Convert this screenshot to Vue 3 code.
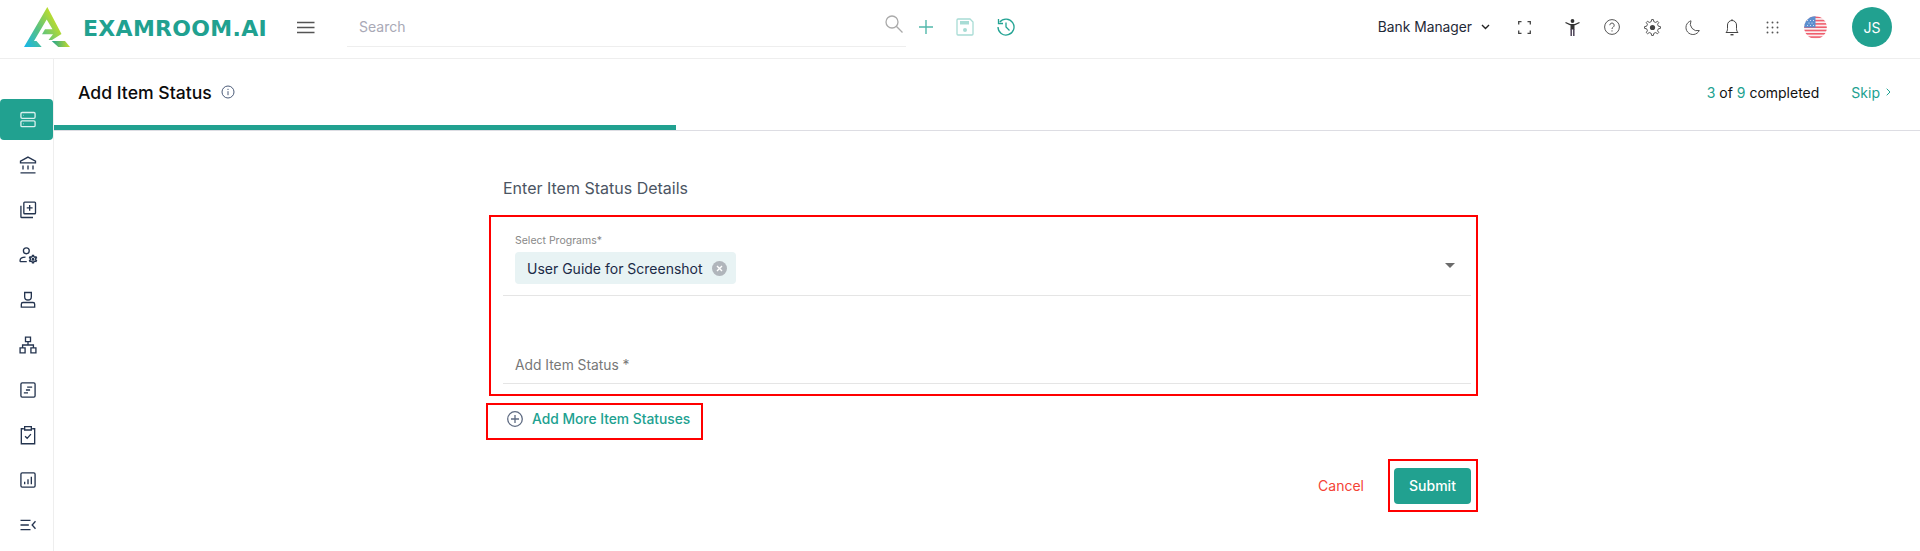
<script setup>
function gearPath(cx, cy, ro, ri, n) {
  const pts = []
  for (let i = 0; i < n; i++) {
    const a = (i / n) * Math.PI * 2
    const w = Math.PI / n
    const list = [[ri, a - w * 0.55], [ro, a - w * 0.28], [ro, a + w * 0.28], [ri, a + w * 0.55]]
    for (const [r, t] of list) pts.push((cx + r * Math.sin(t)).toFixed(2) + ' ' + (cy - r * Math.cos(t)).toFixed(2))
  }
  return 'M' + pts.join('L') + 'z'
}
const topGear = gearPath(8.5, 8.5, 8, 6, 8)
const sideIcons = [
  'M5 3h14a1.5 1.5 0 0 1 1.5 1.5v4A1.5 1.5 0 0 1 19 10H5a1.5 1.5 0 0 1-1.5-1.5v-4A1.5 1.5 0 0 1 5 3zM5 13h14a1.5 1.5 0 0 1 1.5 1.5v4A1.5 1.5 0 0 1 19 20H5a1.5 1.5 0 0 1-1.5-1.5v-4A1.5 1.5 0 0 1 5 13zM6.500 6.500h.5M6.500 16.500h.5',
  'M12 2.500L21 7.500V9.500H3V7.500zM6 12.500V17.500M12 12.500V17.500M18 12.500V17.500M3 21.500H21',
  'M8 2.500h12a1 1 0 0 1 1 1v12a1 1 0 0 1-1 1H8a1 1 0 0 1-1-1v-12a1 1 0 0 1 1-1zM3.500 7V20a1 1 0 0 0 1 1H18M14 6v7M10.500 9.500h7',
  'M10 3.500a3.500 3.500 0 1 1 0 7a3.500 3.500 0 0 1 0-7zM2.500 20v-1.500c0-2.500 3-4 6.500-4M2.500 20h8M' + gearPath(18, 17, 4.5, 3.3, 6).slice(1) + 'M18 16a1 1 0 1 1 0 2a1 1 0 0 1 0-2z',
  'M8 3h8V8a4 4 0 0 1-8 0zM6 15h12a2 2 0 0 1 2 2v3.500H4V17a2 2 0 0 1 2-2zM4 20.500H20',
  'M9 2.500h6v5.500H9zM12 8v4M5.500 15v-3h13v3M2.500 15.500h6v6h-6zM15.500 15.500h6v6h-6z',
  'M5 3.500h14a1.500 1.500 0 0 1 1.500 1.500v14a1.500 1.500 0 0 1-1.500 1.500H5A1.500 1.500 0 0 1 3.500 19V5A1.500 1.500 0 0 1 5 3.500zM11 8.500h6M9.500 12h5M7 15.500h5',
  'M7 4.500H4v18h16v-18H17M8 2h8v4H8zM8.500 13.500l2.500 2.500 4.500-5',
  'M5 3.500h14a1.500 1.500 0 0 1 1.500 1.500v14a1.500 1.500 0 0 1-1.500 1.500H5A1.500 1.500 0 0 1 3.500 19V5A1.500 1.500 0 0 1 5 3.500zM8 17v-3M12 17v-6M16 17V8',
  'M3 6.500h12M3 12h10M3 17.500h12M21 7.500L17 12l4 4.500',
]
const stripes = [0, 1, 2, 3, 4, 5, 6]
const stars = [[-8, -7], [-5, -7], [-2, -7], [-6.500, -4.500], [-3.500, -4.500], [-8, -2], [-5, -2], [-2, -2]]
</script>

<template>
  <div class="page">
    <header class="topbar">
      <div class="brand">
        <svg class="logo" width="46" height="40" viewBox="0 0 46 40">
          <defs>
            <linearGradient id="lg" x1="0" y1="1" x2="1" y2="0.350">
              <stop offset="0" stop-color="#14b6ee" />
              <stop offset="0.450" stop-color="#55c185" />
              <stop offset="1" stop-color="#d2e21a" />
            </linearGradient>
            <linearGradient id="lg2" x1="0" y1="0" x2="1" y2="0">
              <stop offset="0" stop-color="#1fa38f" />
              <stop offset="1" stop-color="#c9de2a" />
            </linearGradient>
          </defs>
          <path fill="url(#lg)" d="M23.300 0L0 40H17.700L12.500 34H10L22.700 12.500L28.500 22.300H21L18 27.300H29L24.500 33H28L37.500 27z" />
          <path fill="url(#lg2)" d="M27.700 34H41L46 40H34.300z" />
        </svg>
        <span class="wordmark">EXAMROOM.AI</span>
      </div>
      <svg class="burger" width="18" height="13" viewBox="0 0 18 13"><path d="M0 1.500H17.500M0 6.500H17.500M0 11.500H17.500" stroke="#555" stroke-width="1.700" /></svg>
      <div class="search">
        <span class="search-text">Search</span>
        <svg class="search-icon" width="18" height="18" viewBox="0 0 18 18" fill="none" stroke="#aaa" stroke-width="1.300"><circle cx="7" cy="7" r="6" /><path d="M11.300 11.300L17.500 17.500" /></svg>
      </div>
      <div class="actions">
        <svg width="14" height="14" viewBox="0 0 14 14"><path d="M7 0V14M0 7H14" stroke="#52b8ab" stroke-width="1.400" /></svg>
        <svg width="18" height="18" viewBox="0 0 18 18" fill="none"><path d="M2 1H14L17 4V16a1 1 0 0 1-1 1H2a1 1 0 0 1-1-1V2a1 1 0 0 1 1-1z" stroke="#a8dcd5" stroke-width="1.300" /><path d="M4 3H13V6.500H4z" fill="#a8dcd5" /><circle cx="9" cy="12" r="2" fill="#a8dcd5" /></svg>
        <svg width="18" height="18" viewBox="0 0 18 18" fill="none" stroke="#22a393" stroke-width="1.300"><path d="M2.800 4A8 8 0 1 1 1 9" /><path d="M1.500 1V5.500H6" /><path d="M9 4.500V9L12.500 12.500" /></svg>
      </div>
      <div class="right">
        <div class="role">
          <span>Bank Manager</span>
          <svg width="9" height="6" viewBox="0 0 9 6" fill="none"><path d="M1 1L4.500 4.500L8 1" stroke="#222" stroke-width="1.400" /></svg>
        </div>
        <svg class="full" width="13" height="13" viewBox="0 0 13 13" fill="none" stroke="#444" stroke-width="1.300"><path d="M.700 3.500V.700H3.500M9.500.700H12.300V3.500M12.300 9.500V12.300H9.500M3.500 12.300H.700V9.500" /></svg>
        <div class="tools">
          <span class="tool"><svg width="15" height="17" viewBox="0 0 15 17"><circle cx="7.500" cy="2" r="1.900" fill="#333" /><path d="M.500 3.500L5 5.700H10L14.500 3.500" stroke="#333" stroke-width="1.300" fill="none" /><path d="M5.500 5.500H9.500V10.500H5.500z" fill="#333" /><path d="M6.200 10V17M8.800 10V17" stroke="#4e4458" stroke-width="1.500" /></svg></span>
          <span class="tool"><svg width="16" height="16" viewBox="0 0 16 16" fill="none" stroke="#555" stroke-width="1"><circle cx="8" cy="8" r="7.400" /><path d="M5.800 6.200a2.200 2.200 0 1 1 3.400 1.900C8.400 8.600 8 9 8 10" /><path d="M8 11.300v1.200" /></svg></span>
          <span class="tool"><svg width="17" height="17" viewBox="0 0 17 17" fill="none"><path :d="topGear" stroke="#555" stroke-width="1" stroke-linejoin="round" /><circle cx="8.500" cy="8.500" r="2.600" fill="#444" /></svg></span>
          <span class="tool"><svg width="15" height="15" viewBox="0 0 15 15" fill="none"><path d="M6 .8A7 7 0 1 0 14.300 10.500A7 7 0 0 1 6 .8z" stroke="#555" stroke-width="1" /></svg></span>
          <span class="tool"><svg width="14" height="17" viewBox="0 0 14 17" fill="none" stroke="#444" stroke-width="1"><path d="M1 13.500c1-1 1.500-2 1.500-4V6a4.500 4.500 0 0 1 9 0v3.500c0 2 .5 3 1.500 4z" /><path d="M5.500 15.700h3" stroke-width="1.400" /><path d="M7 .2v1.500" /></svg></span>
          <span class="tool"><svg width="13" height="13" viewBox="0 0 13 13" fill="#555"><circle cx="1.500" cy="1.500" r=".95" /><circle cx="6.500" cy="1.500" r=".95" /><circle cx="11.500" cy="1.500" r=".95" /><circle cx="1.500" cy="6.500" r=".95" /><circle cx="6.500" cy="6.500" r=".95" /><circle cx="11.500" cy="6.500" r=".95" /><circle cx="1.500" cy="11.500" r=".95" /><circle cx="6.500" cy="11.500" r=".95" /><circle cx="11.500" cy="11.500" r=".95" /></svg></span>
        </div>
        <svg class="flag" width="23" height="23" viewBox="-11.500 -11.500 23 23">
          <defs><clipPath id="fc"><circle r="11.300" /></clipPath></defs>
          <g clip-path="url(#fc)">
            <rect x="-12" y="-12" width="24" height="24" fill="#fbeef0" />
            <rect v-for="s in stripes" :key="s" x="-12" :y="-11 + s * 3.300" width="24" height="1.600" fill="#ef5f6e" />
            <rect x="-12" y="-12" width="12" height="12" fill="#5c8fcf" />
            <circle v-for="(p, i) in stars" :key="i" :cx="p[0]" :cy="p[1]" r=".55" fill="#e6eefa" />
          </g>
        </svg>
        <div class="avatar">JS</div>
      </div>
    </header>

    <div class="body">
      <nav class="side">
        <div v-for="(d, i) in sideIcons" :key="i" class="side-item" :class="{ active: i === 0 }">
          <svg width="20" height="20" viewBox="0 0 24 24" fill="none" stroke="currentColor" stroke-width="1.600"><path :d="d" /></svg>
        </div>
      </nav>

      <main class="main">
        <div class="head">
          <div class="head-row">
            <h1 class="title">Add Item Status</h1>
            <svg class="info" width="14" height="14" viewBox="0 0 14 14" fill="none" stroke="#4b5b78" stroke-width="1"><circle cx="7" cy="7" r="6" /><path d="M7 6.200V10.200" /><path d="M7 3.800V5" /></svg>
            <div class="count"><b>3</b> of <b>9</b> completed</div>
            <div class="skip">Skip<svg width="5" height="8" viewBox="0 0 5 8" fill="none"><path d="M.700.700L4 4L.700 7.300" stroke="#22a393" stroke-width="1" /></svg></div>
          </div>
          <div class="progress"><div class="progress-fill"></div></div>
        </div>

        <section class="form">
          <h2 class="form-title">Enter Item Status Details</h2>
          <div class="mark fields">
            <div class="field-select">
              <label class="mini-label">Select Programs*</label>
              <div class="select-row">
                <div class="chip">
                  <span>User Guide for Screenshot</span>
                  <svg width="15" height="15" viewBox="0 0 15 15"><circle cx="7.500" cy="7.500" r="7.500" fill="#b0b5bb" /><path d="M5 5L10 10M10 5L5 10" stroke="#fff" stroke-width="1.400" /></svg>
                </div>
                <span class="caret"></span>
              </div>
            </div>
            <div class="field-text">Add Item Status *</div>
          </div>
          <div class="mark add-more">
            <svg width="16" height="16" viewBox="0 0 16 16" fill="none" stroke="#5f6b82" stroke-width="1.300"><circle cx="8" cy="8" r="7.300" /><path d="M8 4V12M4 8H12" /></svg>
            <span>Add More Item Statuses</span>
          </div>
          <div class="footer">
            <span class="cancel">Cancel</span>
            <div class="mark submit-wrap"><button class="submit">Submit</button></div>
          </div>
        </section>
      </main>
    </div>
  </div>
</template>

<style>
html, body { margin: 0; background: #fff; }
</style>

<style scoped>
.page {
  width: 1920px;
  height: 551px;
  overflow: hidden;
  font-family: Inter, "Liberation Sans", sans-serif;
  font-size: 14px;
  color: #1f2937;
  background: #fff;
  display: flex;
  flex-direction: column;
}
.topbar {
  height: 58px;
  flex: none;
  box-sizing: content-box;
  border-bottom: 1px solid #eeeeee;
  display: flex;
  align-items: center;
}
.brand, .burger, .actions, .right { margin-bottom: 4px; }
.brand { display: flex; align-items: center; margin-left: 24px; width: 273px; }
.logo { flex: none; }
.wordmark {
  margin-left: 13px;
  font-family: "DejaVu Sans", sans-serif;
  font-weight: 700;
  font-size: 22px;
  line-height: 24px;
  letter-spacing: 0.3px;
  color: #21a190;
  margin-top: 3px;
}
.burger { flex: none; }
.search {
  margin-left: 32px;
  width: 559px;
  height: 47px;
  box-sizing: border-box;
  padding: 7px 3px 0 12px;
  border-bottom: 1px solid #eeeeee;
  display: flex;
  align-items: center;
  justify-content: space-between;
  align-self: flex-start;
}
.search-icon { margin-top: -5px; }
.search-text { color: #a9a9b6; font-size: 14px; }
.actions { display: flex; align-items: center; gap: 23px; margin-left: 13px; }
.right { display: flex; align-items: center; margin-left: auto; margin-right: 28px; }
.role { display: flex; align-items: center; gap: 9px; font-size: 13.800px; color: #1f2937; }
.full { margin-left: 28px; }
.tools { display: flex; margin-left: 21px; }
.tool { width: 40px; display: flex; justify-content: center; align-items: center; }
.flag { margin-left: 12px; }
.avatar {
  margin-left: 25px;
  width: 40px;
  height: 40px;
  border-radius: 50%;
  background: #21a190;
  color: #fff;
  font-size: 14px;
  display: flex;
  align-items: center;
  justify-content: center;
}
.body { flex: 1; display: flex; min-height: 0; }
.side {
  width: 53px;
  flex: none;
  border-right: 1px solid #eeeeee;
  padding-top: 40px;
  display: flex;
  flex-direction: column;
  gap: 4px;
}
.side-item {
  height: 41px;
  padding: 1px 0 0 2px;
  box-sizing: border-box;
  display: flex;
  align-items: center;
  justify-content: center;
  color: #24344f;
  flex: none;
}
.side-item.active { background: #21a190; color: #d9f0ed; border-radius: 4px; }
.main { flex: 1; min-width: 0; }
.head { height: 72px; box-sizing: border-box; border-bottom: 1px solid #dddde3; display: flex; flex-direction: column; }
.head-row { flex: 1; display: flex; align-items: center; padding-left: 24px; padding-right: 29px; }
.title { margin: 0; font-size: 17.600px; font-weight: 500; color: #0b0b0b; }
.info { margin-left: 9px; }
.count { margin-left: auto; font-size: 14px; color: #111; }
.count b { font-weight: 400; color: #21a190; }
.skip { margin-left: 32px; color: #21a190; font-size: 14px; display: flex; align-items: center; gap: 6px; }
.progress { height: 5px; flex: none; }
.progress-fill { width: 622px; height: 100%; background: #21a190; }
.form { margin-left: 435px; width: 989px; }
.form-title { margin: 47px 0 0 14px; font-size: 16px; line-height: 21px; font-weight: 400; color: #4b5563; }
.mark { border: 2px solid #ff0000; box-sizing: border-box; }
.fields { margin-top: 16px; height: 181px; padding: 0 5px 0 12px; }
.field-select { height: 79px; box-sizing: border-box; border-bottom: 1px solid #e5e5e5; padding: 18px 0 0 12px; }
.mini-label { display: block; font-size: 10.500px; line-height: 12px; color: #888; }
.select-row { display: flex; align-items: center; justify-content: space-between; margin-top: 5px; padding-right: 16px; }
.chip {
  width: 221px;
  height: 32px;
  box-sizing: border-box;
  border-radius: 4px;
  background: #e8f3f4;
  padding: 0 9px 0 12px;
  display: flex;
  align-items: center;
  justify-content: space-between;
  font-weight: 400;
  font-size: 14px;
  color: #1b2a47;
}
.caret { width: 0; height: 0; border-left: 5px solid transparent; border-right: 5px solid transparent; border-top: 5px solid #6b6b6b; margin-bottom: 5px; }
.field-text { height: 88px; box-sizing: border-box; border-bottom: 1px solid #e5e5e5; padding: 0 0 10px 12px; display: flex; align-items: flex-end; color: #777; font-size: 13.800px; }
.add-more {
  margin: 7px 0 0 -3px;
  width: 217px;
  height: 37px;
  padding: 0 0 6px 19px;
  display: flex;
  align-items: center;
  gap: 9px;
  color: #21a190;
  font-weight: 500;
  font-size: 13.800px;
}
.footer { display: flex; justify-content: flex-end; align-items: center; margin-top: 19px; }
.cancel { color: #f44336; font-size: 14px; margin-right: 24px; }
.submit-wrap { width: 90px; height: 53px; display: flex; align-items: center; justify-content: center; padding-right: 1px; }
.submit {
  width: 77px;
  height: 36px;
  border: 0;
  border-radius: 4px;
  background: #21a190;
  color: #fff;
  font: 500 14px Inter, "Liberation Sans", sans-serif;
}
</style>
